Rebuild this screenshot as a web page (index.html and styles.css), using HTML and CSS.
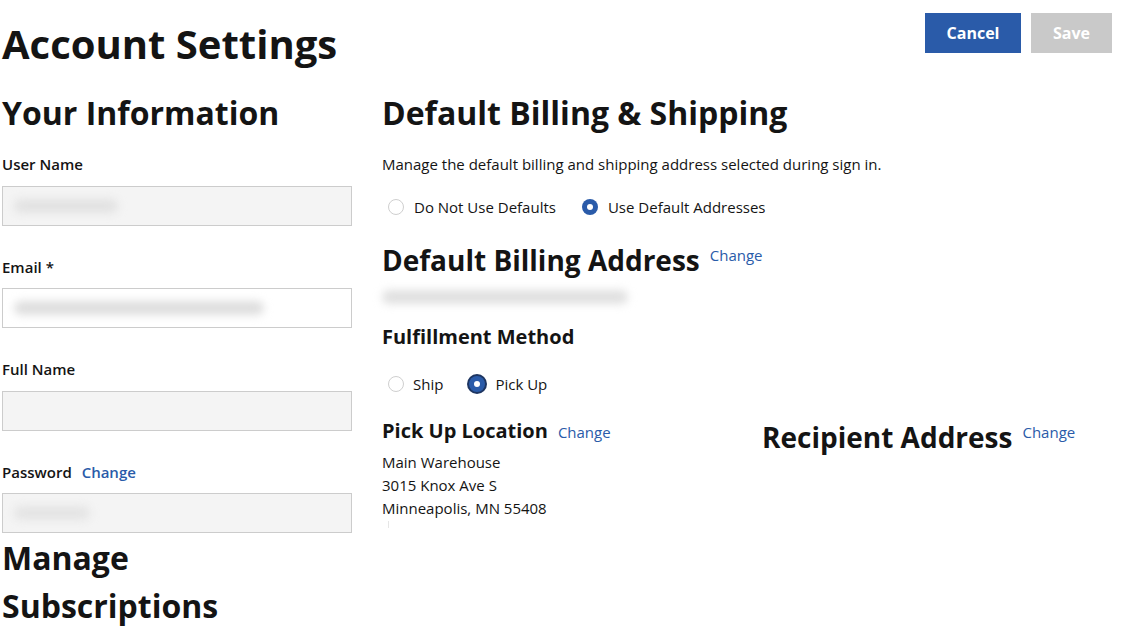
FILE: index.html
```html
<!DOCTYPE html>
<html lang="en">
<head>
<meta charset="utf-8">
<title>Account Settings</title>
<link rel="stylesheet" href="styles.css">
</head>
<body>
<div class="page">
  <header class="top">
    <h1 class="title">Account Settings</h1>
    <div class="actions">
      <button class="btn btn-primary" type="button">Cancel</button>
      <button class="btn btn-disabled" type="button" disabled>Save</button>
    </div>
  </header>

  <div class="columns">
    <section class="left">
      <h2 class="h2">Your Information</h2>
      <div class="field">
        <label class="label">User Name</label>
        <div class="input input-disabled"><span class="blur blur-user"></span></div>
      </div>
      <div class="field">
        <label class="label">Email *</label>
        <div class="input"><span class="blur blur-email"></span></div>
      </div>
      <div class="field">
        <label class="label">Full Name</label>
        <div class="input input-disabled"></div>
      </div>
      <div class="field field-last">
        <label class="label">Password <a class="link link-inline" href="#">Change</a></label>
        <div class="input input-disabled"><span class="blur blur-pass"></span></div>
      </div>
      <h2 class="h2 subs">Manage<br>Subscriptions</h2>
    </section>

    <section class="right">
      <h2 class="h2">Default Billing &amp; Shipping</h2>
      <p class="desc">Manage the default billing and shipping address selected during sign in.</p>
      <div class="radios radios-top">
        <label class="radio"><span class="dot"></span>Do Not Use Defaults</label>
        <label class="radio"><span class="dot dot-on"></span>Use Default Addresses</label>
      </div>

      <div class="head-row">
        <h2 class="h2b">Default Billing Address</h2>
        <a class="link link-sup link-billing" href="#">Change</a>
      </div>
      <div class="billing-line"><span class="blur blur-billing"></span></div>

      <h3 class="h3 fm">Fulfillment Method</h3>
      <div class="radios radios-fm">
        <label class="radio"><span class="dot"></span>Ship</label>
        <label class="radio radio-focus"><span class="dot dot-on dot-focus"></span>Pick Up</label>
      </div>

      <div class="split">
        <div class="pickup">
          <div class="head-row">
            <h3 class="h3">Pick Up Location</h3>
            <a class="link link-sup" href="#">Change</a>
          </div>
          <address class="addr">
            Main Warehouse<br>
            3015 Knox Ave S<br>
            Minneapolis, MN 55408
          </address>
          <span class="tick"></span>
        </div>
        <div class="recipient">
          <div class="head-row">
            <h2 class="h2b">Recipient Address</h2>
            <a class="link link-sup" href="#">Change</a>
          </div>
        </div>
      </div>
    </section>
  </div>
</div>
</body>
</html>
```

FILE: styles.css
```css
* { box-sizing: border-box; }

html, body {
  margin: 0;
  padding: 0;
  background: #ffffff;
}

body {
  font-family: "Open Sans", "Liberation Sans", Arial, sans-serif;
  color: #141414;
  font-size: 15px;
  line-height: 20px;
}

.page {
  width: 1132px;
  height: 636px;
  overflow: hidden;
  padding: 0 20px 0 2px;
}

.top {
  display: flex;
  justify-content: space-between;
  align-items: flex-start;
}

.title {
  margin: 20px 0 0 0;
  font-size: 40px;
  line-height: 48px;
  font-weight: 700;
}

.actions {
  display: flex;
  gap: 10px;
  margin-top: 13px;
}

.btn {
  height: 40px;
  border: 0;
  font-family: inherit;
  font-size: 16px;
  font-weight: 700;
  color: #ffffff;
  padding: 0;
}

.btn-primary {
  width: 96px;
  background: #2a5ba9;
}

.btn-disabled {
  width: 81px;
  background: #c9c9c9;
}

.columns {
  display: grid;
  grid-template-columns: 350px 1fr;
  column-gap: 30px;
  margin-top: 21px;
}

.h2 {
  margin: 0;
  font-size: 32px;
  line-height: 48px;
  font-weight: 700;
}

.h2b {
  margin: 0;
  font-size: 28px;
  line-height: 42px;
  font-weight: 700;
}

.h3 {
  margin: 0;
  font-size: 20px;
  line-height: 30px;
  font-weight: 700;
}

.field {
  margin-top: 17px;
}

.field + .field {
  margin-top: 31px;
}

.label {
  display: block;
  font-weight: 600;
  font-size: 15px;
  line-height: 20px;
  margin-bottom: 11.5px;
}

.input {
  height: 40px;
  border: 1px solid #cccccc;
  background: #ffffff;
  display: flex;
  align-items: center;
  padding-left: 11px;
}

.input-disabled {
  background: #f4f4f4;
}

.blur {
  display: block;
  height: 14px;
  border-radius: 7px;
  background: #e0e0e0;
  filter: blur(4px);
}

.blur-user { width: 104px; background: #e2e2e2; }
.blur-email { width: 250px; background: #dedede; }
.blur-pass { width: 76px; background: #e4e4e4; }
.blur-billing { width: 246px; background: #e0e0e0; }

.link {
  color: #2a5ba9;
  text-decoration: none;
  font-weight: 400;
}

.link-inline {
  font-weight: 600;
  margin-left: 6px;
}

.subs {
  margin-top: 1px;
}

.desc {
  margin: 17px 0 0 0;
}

.radios {
  display: flex;
  align-items: center;
  gap: 26px;
  padding-left: 6px;
}

.radios-top {
  margin-top: 23px;
}

.radio {
  display: flex;
  align-items: center;
  gap: 10px;
}

.dot {
  width: 16px;
  height: 16px;
  border-radius: 50%;
  border: 1px solid #cfcfcf;
  background: #ffffff;
  flex: none;
  position: relative;
}

.dot-on {
  border: 0;
  background: #2a5ba9;
}

.dot-on::after {
  content: "";
  position: absolute;
  left: 5px;
  top: 5px;
  width: 6px;
  height: 6px;
  border-radius: 50%;
  background: #ffffff;
}

.dot-focus {
  box-shadow: 0 0 0 2px #1d3561;
}

.radios-fm {
  margin-top: 22px;
  gap: 26px;
}

.radios-fm .radio {
  gap: 9px;
}

.radios-fm .radio-focus {
  gap: 10px;
}

.head-row {
  display: flex;
  align-items: flex-start;
}

.head-row .link-sup {
  margin-left: 10px;
  margin-top: 6px;
}

.head-row .link-billing {
  margin-left: 10px;
  margin-top: 6px;
}

.right > .head-row {
  margin-top: 22px;
}

.billing-line {
  height: 14px;
  margin-top: 9px;
  display: flex;
  align-items: center;
}

.fm {
  margin-top: 18px;
}

.split {
  display: grid;
  grid-template-columns: 380px 1fr;
  margin-top: 22px;
}

.addr {
  font-style: normal;
  line-height: 23px;
  margin-top: 5px;
}

.tick {
  display: block;
  width: 1px;
  height: 7px;
  margin: 1px 0 0 6px;
  background: #e6e6e6;
}
```
